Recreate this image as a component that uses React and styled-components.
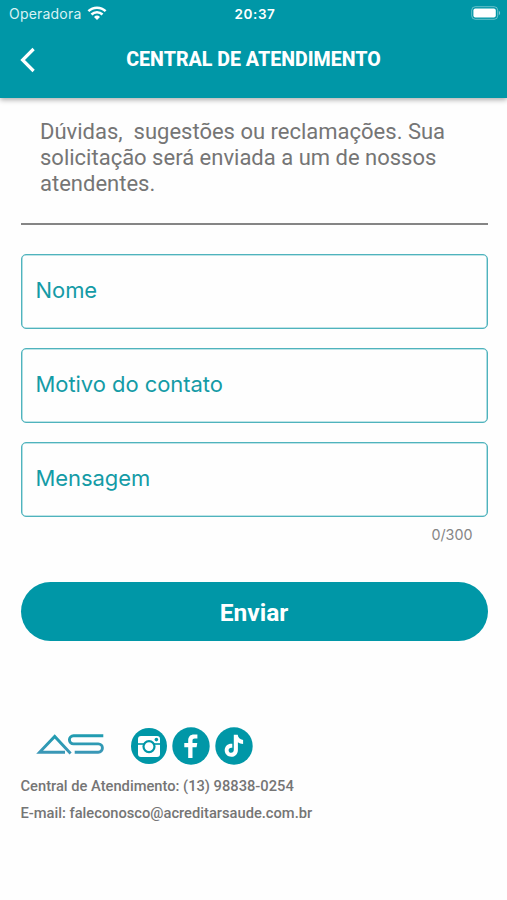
import React, { useState } from 'react';
import styled, { createGlobalStyle } from 'styled-components';

const TEAL = '#0097a7';

const fields = [
    { name: 'nome', label: 'Nome' },
    { name: 'motivo', label: 'Motivo do contato' },
    { name: 'mensagem', label: 'Mensagem', max: 300 },
];

function WifiIcon() {
    return (
        <svg width="20" height="15" viewBox="0 0 20 15" fill="none" stroke="#fff" strokeWidth="2.5">
            <path d="M1.4 5.2a12.3 12.3 0 0 1 17.2 0" />
            <path d="M4.5 8.5a7.8 7.8 0 0 1 11 0" />
            <path d="M10 14l-3-3.1a4.3 4.3 0 0 1 6 0z" fill="#fff" stroke="none" />
        </svg>
    )
}

function BatteryIcon() {
    return (
        <svg width="30" height="14" viewBox="0 0 30 14">
            <rect x="0.7" y="0.7" width="26" height="12.6" rx="3.6" fill="none" stroke="#fff" strokeOpacity="0.4" />
            <rect x="2.4" y="2.4" width="22.4" height="9.2" rx="2" fill="#fff" />
            <path d="M27.9 4.8c1.6.7 1.6 3.7 0 4.4z" fill="#fff" fillOpacity="0.5" />
        </svg>
    )
}

function BackIcon() {
    return (
        <svg width="16" height="26" viewBox="0 0 16 26" fill="none" stroke="#fff" strokeWidth="3.2">
            <path d="M13.6 2L2.6 13l11 11" />
        </svg>
    )
}

function Logo() {
    return (
        <svg width="70" height="24" viewBox="0 0 70 24" fill="none" stroke="url(#brand)" strokeWidth="2.9">
            <defs>
                <linearGradient id="brand" gradientUnits="userSpaceOnUse" x1="0" y1="2" x2="0" y2="22">
                    <stop offset="0" stopColor="#1f9cb0" />
                    <stop offset="1" stopColor="#3d97b7" />
                </linearGradient>
            </defs>
            <path d="M31 20.2H5.6L20.7 4.4L36.6 21.4" />
            <path d="M69.3 3.7H39.5a4.1 4.1 0 0 0-4.1 4.1a4.1 4.1 0 0 0 4.1 4.1H64.3a4.1 4.1 0 0 1 4.1 4.1a4.1 4.1 0 0 1-4.1 4.2H40.7" />
        </svg>
    )
}

function InstagramIcon() {
    return (
        <svg width="36" height="36" viewBox="0 0 36 36">
            <circle cx="18" cy="18" r="18" fill={TEAL} />
            <rect x="7" y="8" width="22" height="21" rx="3" fill="#fff" />
            <path d="M7 16h22" stroke={TEAL} strokeWidth="1.6" />
            <circle cx="18" cy="18.6" r="5.5" fill="#fff" stroke={TEAL} strokeWidth="2.2" />
            <circle cx="25.4" cy="11.6" r="1.8" fill={TEAL} />
        </svg>
    )
}

function FacebookIcon() {
    return (
        <svg width="38" height="38" viewBox="0 0 38 38">
            <circle cx="19" cy="19" r="18.7" fill={TEAL} />
            <path d="M16.2 31V20.2h-3.9v-4.1h3.9v-2.7c0-3.9 2.2-6 5.8-6h3.4v4.1h-2.6c-1.6 0-2.3.8-2.3 2.1v2.5h4.8l-.7 4.1h-4.1V31z" fill="#fff" />
        </svg>
    )
}

function TiktokIcon() {
    return (
        <svg width="38" height="38" viewBox="0 0 38 38">
            <circle cx="19" cy="19" r="18.7" fill={TEAL} />
            <path d="M18.8 7.8h3.9c.4 3 2.2 4.8 5.4 5.1v4c-2 0-3.7-.6-5.2-1.6v7.6c0 4.2-2.9 6.9-6.6 6.9s-6.6-2.9-6.6-6.5c0-4.2 3.4-7 7.6-6.5v4c-2-.6-3.7.5-3.7 2.4 0 1.6 1.2 2.6 2.5 2.6 1.6 0 2.7-1 2.7-3z" fill="#fff" />
        </svg>
    )
}

export default function App() {
    const [values, setValues] = useState({ nome: '', motivo: '', mensagem: '' });

    const handleChange = (e) => {
        const { name, value } = e.target;
        setValues({ ...values, [name]: value });
    }

    return (
        <Page>
            <GlobalStyle />
            <Header>
                <StatusBar>
                    <Carrier>
                        <span>Operadora</span>
                        <WifiIcon />
                    </Carrier>
                    <Clock>20:37</Clock>
                    <Battery><BatteryIcon /></Battery>
                </StatusBar>
                <NavBar>
                    <BackButton aria-label="Voltar"><BackIcon /></BackButton>
                    <Title>CENTRAL DE ATENDIMENTO</Title>
                </NavBar>
            </Header>
            <Content>
                <Intro>
                    <IntroLine>Dúvidas,&nbsp; sugestões ou reclamações. Sua</IntroLine>
                    <IntroLine>solicitação será enviada a um de nossos</IntroLine>
                    <IntroLine>atendentes.</IntroLine>
                </Intro>
                <Form onSubmit={(e) => e.preventDefault()}>
                    {
                        fields.map((item) => (
                            <Input
                                key={item.name}
                                name={item.name}
                                placeholder={item.label}
                                maxLength={item.max}
                                value={values[item.name]}
                                onChange={handleChange}
                            />
                        ))
                    }
                    <Counter>{values.mensagem.length}/300</Counter>
                    <SubmitButton type="submit">Enviar</SubmitButton>
                </Form>
                <Footer>
                    <Social>
                        <Logo />
                        <SocialLinks>
                            <InstagramIcon />
                            <FacebookIcon />
                            <TiktokIcon />
                        </SocialLinks>
                    </Social>
                    <Contact>Central de Atendimento: (13) 98838-0254</Contact>
                    <Contact>E-mail: faleconosco@acreditarsaude.com.br</Contact>
                </Footer>
            </Content>
        </Page>
    )
}

const GlobalStyle = createGlobalStyle`
    * {
        box-sizing: border-box;
    }
    body {
        margin: 0;
        background: #fefefe;
        font-family: Roboto, "Liberation Sans", sans-serif;
    }
    svg {
        display: block;
        flex-shrink: 0;
    }
`;

const Page = styled.div`
    min-height: 900px;
    overflow: hidden;
`;

const Header = styled.header`
    height: 98px;
    background: ${TEAL};
    color: #fff;
    box-shadow: 0 2px 5px rgba(0, 0, 0, 0.32);
`;

const StatusBar = styled.div`
    display: grid;
    grid-template-columns: 1fr auto 1fr;
    align-items: center;
    height: 27px;
    padding: 0 6px 0 9px;
    font-family: Inter, Roboto, sans-serif;
`;

const Carrier = styled.div`
    display: flex;
    align-items: center;
    gap: 5.5px;
    font-size: 14px;
    letter-spacing: 0.2px;
    color: #d9f2f4;
    svg {
        margin-top: -1px;
    }
`;

const Clock = styled.span`
    font-size: 13.5px;
    font-weight: 600;
    letter-spacing: 0.6px;
`;

const Battery = styled.div`
    justify-self: end;
    margin-top: -1px;
`;

const NavBar = styled.div`
    display: grid;
    grid-template-columns: 36px 1fr 36px;
    align-items: center;
    height: 65px;
    padding: 0 20px;
`;

const BackButton = styled.button`
    padding: 0;
    border: 0;
    background: none;
`;

const Title = styled.h1`
    margin: 0;
    font-size: 19.6px;
    font-weight: 800;
    letter-spacing: 0;
    text-align: center;
    white-space: nowrap;
`;

const Content = styled.main`
    padding: 21px 19.5px 0 20.5px;
`;

const Intro = styled.div`
    height: 106px;
    padding: 0 19.5px;
    border-bottom: 2px solid #858585;
    color: #757575;
`;

const IntroLine = styled.p`
    margin: 0;
    font-size: 22px;
    line-height: 25.8px;
    white-space: nowrap;
`;

const Form = styled.form`
    display: flex;
    flex-direction: column;
    gap: 19px;
    padding-top: 28.6px;
`;

const Input = styled.input`
    height: 75px;
    padding: 0 14px 3px;
    border: 1px solid #4fb3bd;
    border-radius: 5px;
    outline: none;
    box-shadow: inset 0 0 0 0.6px #7fc9d0;
    background: transparent;
    color: #333;
    font-family: Inter, Roboto, sans-serif;
    font-size: 22px;
    letter-spacing: -0.06px;
    &::placeholder {
        color: #149ba6;
        opacity: 1;
    }
`;

const Counter = styled.span`
    align-self: flex-end;
    margin: -11px 15px 0 0;
    font-family: Inter, Roboto, sans-serif;
    font-size: 14.3px;
    line-height: 20px;
    color: #858585;
`;

const SubmitButton = styled.button`
    height: 58.6px;
    margin-top: 18.7px;
    padding: 2px 0 0;
    border: 0;
    border-radius: 30px;
    background: ${TEAL};
    color: #fff;
    font-family: inherit;
    font-size: 24.5px;
    font-weight: 700;
`;

const Footer = styled.footer`
    padding-top: 86.3px;
`;

const Social = styled.div`
    display: flex;
    align-items: center;
    gap: 27.5px;
    height: 38px;
    margin-bottom: 8px;
    padding-left: 13px;
    > svg {
        margin-top: -4px;
    }
`;

const SocialLinks = styled.div`
    display: flex;
    align-items: center;
    gap: 5px;
`;

const Contact = styled.p`
    margin: 0;
    font-size: 14.7px;
    font-weight: 500;
    line-height: 27px;
    color: #757575;
    white-space: nowrap;
`;
